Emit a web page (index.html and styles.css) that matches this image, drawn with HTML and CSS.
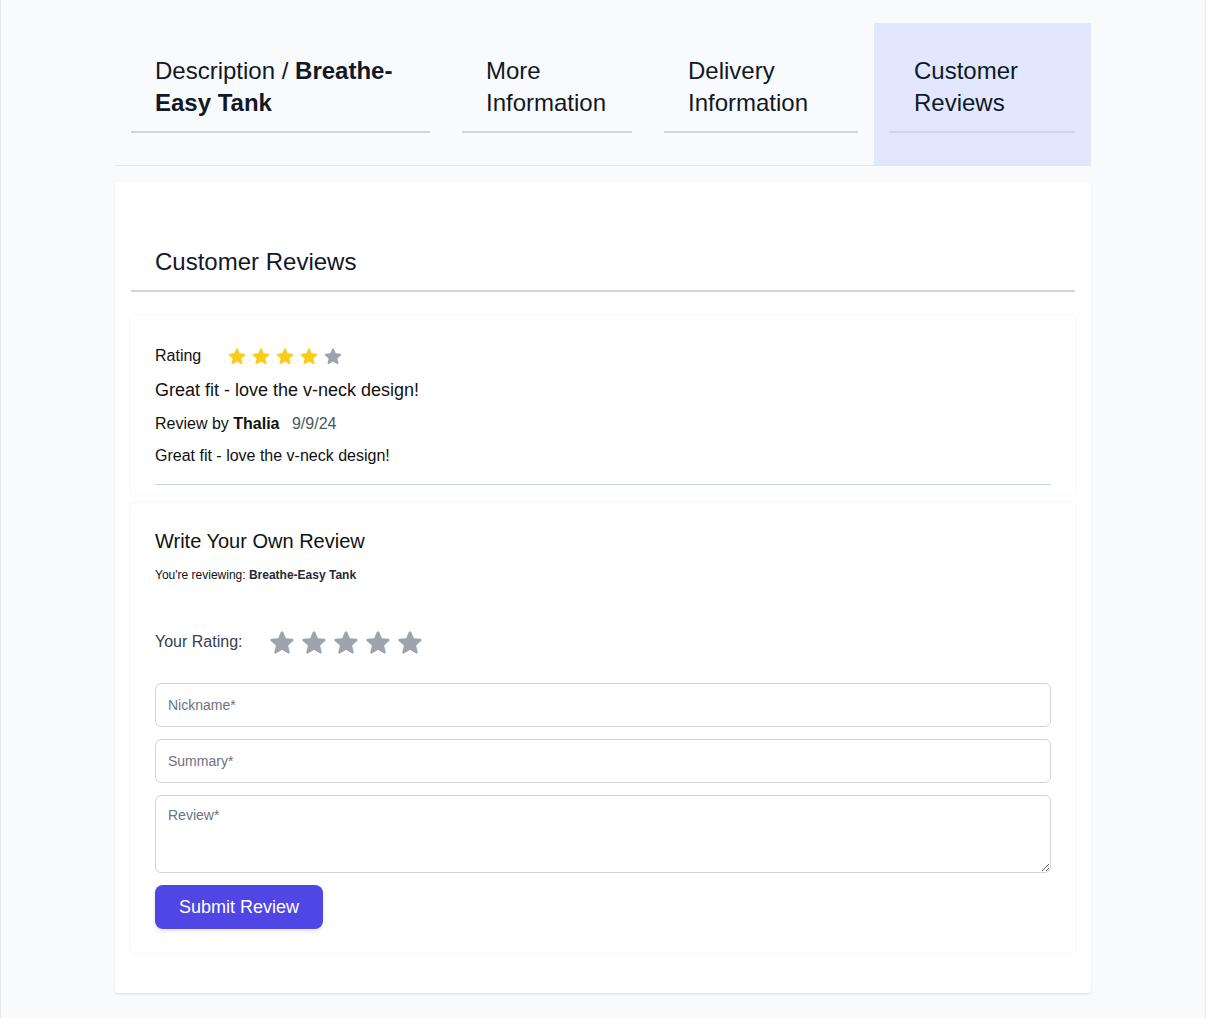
FILE: index.html
```html
<!DOCTYPE html>
<html lang="en">
<head>
<meta charset="utf-8">
<title>Customer Reviews</title>
<link rel="stylesheet" href="styles.css">
</head>
<body>
<div class="page">
  <div class="container">
    <nav class="tabs">
      <div class="tab tab-desc"><div class="tab-inner">Description / <b>Breathe-Easy Tank</b></div></div>
      <div class="tab tab-more"><div class="tab-inner">More Information</div></div>
      <div class="tab tab-delivery"><div class="tab-inner">Delivery Information</div></div>
      <div class="tab tab-reviews active"><div class="tab-inner">Customer Reviews</div></div>
    </nav>

    <section class="panel">
      <h2 class="panel-title">Customer Reviews</h2>

      <article class="review-card">
        <div class="rating-row">
          <span class="rating-label">Rating</span>
          <div class="stars small">
            <svg class="star on" viewBox="0 0 20 20"><path d="M10.868 2.884c-.321-.772-1.415-.772-1.736 0l-1.83 4.401-4.753.381c-.833.067-1.171 1.107-.536 1.651l3.62 3.102-1.106 4.637c-.194.813.691 1.456 1.405 1.02L10 15.591l4.069 2.485c.713.436 1.598-.207 1.404-1.02l-1.106-4.637 3.62-3.102c.635-.544.297-1.584-.536-1.65l-4.752-.382-1.831-4.401z"/></svg>
            <svg class="star on" viewBox="0 0 20 20"><path d="M10.868 2.884c-.321-.772-1.415-.772-1.736 0l-1.83 4.401-4.753.381c-.833.067-1.171 1.107-.536 1.651l3.62 3.102-1.106 4.637c-.194.813.691 1.456 1.405 1.02L10 15.591l4.069 2.485c.713.436 1.598-.207 1.404-1.02l-1.106-4.637 3.62-3.102c.635-.544.297-1.584-.536-1.65l-4.752-.382-1.831-4.401z"/></svg>
            <svg class="star on" viewBox="0 0 20 20"><path d="M10.868 2.884c-.321-.772-1.415-.772-1.736 0l-1.83 4.401-4.753.381c-.833.067-1.171 1.107-.536 1.651l3.62 3.102-1.106 4.637c-.194.813.691 1.456 1.405 1.02L10 15.591l4.069 2.485c.713.436 1.598-.207 1.404-1.02l-1.106-4.637 3.62-3.102c.635-.544.297-1.584-.536-1.65l-4.752-.382-1.831-4.401z"/></svg>
            <svg class="star on" viewBox="0 0 20 20"><path d="M10.868 2.884c-.321-.772-1.415-.772-1.736 0l-1.83 4.401-4.753.381c-.833.067-1.171 1.107-.536 1.651l3.62 3.102-1.106 4.637c-.194.813.691 1.456 1.405 1.02L10 15.591l4.069 2.485c.713.436 1.598-.207 1.404-1.02l-1.106-4.637 3.62-3.102c.635-.544.297-1.584-.536-1.65l-4.752-.382-1.831-4.401z"/></svg>
            <svg class="star off" viewBox="0 0 20 20"><path d="M10.868 2.884c-.321-.772-1.415-.772-1.736 0l-1.83 4.401-4.753.381c-.833.067-1.171 1.107-.536 1.651l3.62 3.102-1.106 4.637c-.194.813.691 1.456 1.405 1.02L10 15.591l4.069 2.485c.713.436 1.598-.207 1.404-1.02l-1.106-4.637 3.62-3.102c.635-.544.297-1.584-.536-1.65l-4.752-.382-1.831-4.401z"/></svg>
          </div>
        </div>
        <h3 class="review-title">Great fit - love the v-neck design!</h3>
        <p class="review-meta">Review by <b>Thalia</b> <span class="review-date">9/9/24</span></p>
        <p class="review-body">Great fit - love the v-neck design!</p>
        <hr class="review-sep">
      </article>

      <form class="review-form" onsubmit="return false">
        <h3 class="form-title">Write Your Own Review</h3>
        <p class="form-sub">You're reviewing: <b>Breathe-Easy Tank</b></p>
        <div class="your-rating">
          <span class="your-rating-label">Your Rating:</span>
          <div class="stars big">
            <svg class="star off" viewBox="0 0 20 20"><path d="M10.868 2.884c-.321-.772-1.415-.772-1.736 0l-1.83 4.401-4.753.381c-.833.067-1.171 1.107-.536 1.651l3.62 3.102-1.106 4.637c-.194.813.691 1.456 1.405 1.02L10 15.591l4.069 2.485c.713.436 1.598-.207 1.404-1.02l-1.106-4.637 3.62-3.102c.635-.544.297-1.584-.536-1.65l-4.752-.382-1.831-4.401z"/></svg>
            <svg class="star off" viewBox="0 0 20 20"><path d="M10.868 2.884c-.321-.772-1.415-.772-1.736 0l-1.83 4.401-4.753.381c-.833.067-1.171 1.107-.536 1.651l3.62 3.102-1.106 4.637c-.194.813.691 1.456 1.405 1.02L10 15.591l4.069 2.485c.713.436 1.598-.207 1.404-1.02l-1.106-4.637 3.62-3.102c.635-.544.297-1.584-.536-1.65l-4.752-.382-1.831-4.401z"/></svg>
            <svg class="star off" viewBox="0 0 20 20"><path d="M10.868 2.884c-.321-.772-1.415-.772-1.736 0l-1.83 4.401-4.753.381c-.833.067-1.171 1.107-.536 1.651l3.62 3.102-1.106 4.637c-.194.813.691 1.456 1.405 1.02L10 15.591l4.069 2.485c.713.436 1.598-.207 1.404-1.02l-1.106-4.637 3.62-3.102c.635-.544.297-1.584-.536-1.65l-4.752-.382-1.831-4.401z"/></svg>
            <svg class="star off" viewBox="0 0 20 20"><path d="M10.868 2.884c-.321-.772-1.415-.772-1.736 0l-1.83 4.401-4.753.381c-.833.067-1.171 1.107-.536 1.651l3.62 3.102-1.106 4.637c-.194.813.691 1.456 1.405 1.02L10 15.591l4.069 2.485c.713.436 1.598-.207 1.404-1.02l-1.106-4.637 3.62-3.102c.635-.544.297-1.584-.536-1.65l-4.752-.382-1.831-4.401z"/></svg>
            <svg class="star off" viewBox="0 0 20 20"><path d="M10.868 2.884c-.321-.772-1.415-.772-1.736 0l-1.83 4.401-4.753.381c-.833.067-1.171 1.107-.536 1.651l3.62 3.102-1.106 4.637c-.194.813.691 1.456 1.405 1.02L10 15.591l4.069 2.485c.713.436 1.598-.207 1.404-1.02l-1.106-4.637 3.62-3.102c.635-.544.297-1.584-.536-1.65l-4.752-.382-1.831-4.401z"/></svg>
          </div>
        </div>
        <input class="field" type="text" placeholder="Nickname*">
        <input class="field" type="text" placeholder="Summary*">
        <textarea class="field area" placeholder="Review*"></textarea>
        <div class="actions"><button class="submit" type="submit">Submit Review</button></div>
      </form>
    </section>
  </div>
</div>
</body>
</html>
```

FILE: styles.css
```css
* { box-sizing: border-box; }

html, body {
  margin: 0;
  padding: 0;
}

body {
  background: #f9fafb;
  font-family: "Liberation Sans", Arial, Helvetica, sans-serif;
  color: #111827;
}

.page {
  min-height: 1018px;
  border-left: 1px solid #e5e7eb;
  border-right: 1px solid #e5e7eb;
  padding-top: 23px;
  padding-bottom: 25px;
}

.container {
  width: 976px;
  margin: 0 auto;
}

/* Tabs */
.tabs {
  display: grid;
  grid-template-columns: 331px 202px 226px 217px;
  border-bottom: 1px solid #e5e7eb;
}

.tab {
  padding: 16px 16px 32px;
  font-size: 24px;
  line-height: 32px;
  color: #111827;
  cursor: pointer;
}

.tab.active {
  background: #e0e7ff;
}

.tab-inner {
  padding: 16px 24px 12px;
  border-bottom: 2px solid #d1d5db;
}

.tab-inner b { font-weight: 700; }

/* Panel */
.panel {
  margin-top: 16px;
  background: #ffffff;
  border-radius: 3px;
  box-shadow: 0 1px 3px rgba(0, 0, 0, 0.08), 0 1px 2px rgba(0, 0, 0, 0.04);
  padding: 16px 16px 40px;
}

.panel-title {
  margin: 0;
  padding: 48px 24px 12px;
  font-size: 24px;
  line-height: 32px;
  font-weight: 400;
  color: #111827;
  border-bottom: 2px solid #d1d5db;
}

/* Review card */
.review-card {
  margin-top: 24px;
  background: #ffffff;
  padding: 25px 24px 10px;
  box-shadow: 0 0 3px rgba(0, 0, 0, 0.05);
  color: #111111;
}

.rating-row {
  display: flex;
  align-items: center;
  height: 30px;
}

.rating-label {
  font-size: 16px;
  line-height: 24px;
}

.stars {
  display: flex;
}

.stars.small {
  margin-left: 26px;
  gap: 4px;
}

.stars.small .star {
  width: 20px;
  height: 20px;
}

.stars.big {
  gap: 4px;
  margin-left: 26px;
}

.stars.big .star {
  width: 28px;
  height: 28px;
}

.star.on { fill: #facc15; }
.star.off { fill: #9ca3af; }

.review-title {
  margin: 5px 0 0;
  font-size: 18px;
  line-height: 28px;
  font-weight: 400;
}

.review-meta {
  margin: 8px 0 0;
  font-size: 16px;
  line-height: 24px;
}

.review-meta b { font-weight: 700; }

.review-date {
  margin-left: 8px;
  color: #4b5563;
}

.review-body {
  margin: 8px 0 0;
  font-size: 16px;
  line-height: 24px;
}

.review-sep {
  margin: 16px 0 0;
  border: 0;
  border-top: 1px solid #cbd5e1;
  height: 0;
}

/* Form */
.review-form {
  margin-top: 8px;
  background: #ffffff;
  padding: 24px;
  border-radius: 3px;
  box-shadow: 0 0 3px rgba(0, 0, 0, 0.07);
  display: flex;
  flex-direction: column;
}

.form-title {
  margin: 0;
  font-size: 20px;
  line-height: 28px;
  font-weight: 400;
  color: #111111;
}

.form-sub {
  margin: 12px 0 0;
  font-size: 12px;
  line-height: 16px;
  color: #111111;
}

.form-sub b { font-weight: 700; color: #1f2937; }

.your-rating {
  display: flex;
  align-items: center;
  margin-top: 45px;
  height: 28px;
}

.your-rating-label {
  font-size: 16px;
  line-height: 24px;
  color: #374151;
}

.field {
  display: block;
  width: 100%;
  height: 44px;
  margin-top: 12px;
  padding: 0 12px;
  border: 1px solid #d1d5db;
  border-radius: 6px;
  background: #ffffff;
  font-family: "Liberation Sans", Arial, Helvetica, sans-serif;
  font-size: 14px;
  color: #111827;
  outline: none;
}

.your-rating + .field { margin-top: 27px; }

.field::placeholder { color: #6b7280; }

.field.area {
  height: 78px;
  padding: 10px 12px;
  resize: vertical;
  line-height: 18px;
}

.actions {
  margin-top: 12px;
}

.submit {
  height: 44px;
  padding: 0 24px;
  border: 0;
  border-radius: 8px;
  background: #4f46e5;
  color: #ffffff;
  font-family: "Liberation Sans", Arial, Helvetica, sans-serif;
  font-size: 18px;
  box-shadow: 0 2px 4px rgba(0, 0, 0, 0.12);
  cursor: pointer;
}
```
